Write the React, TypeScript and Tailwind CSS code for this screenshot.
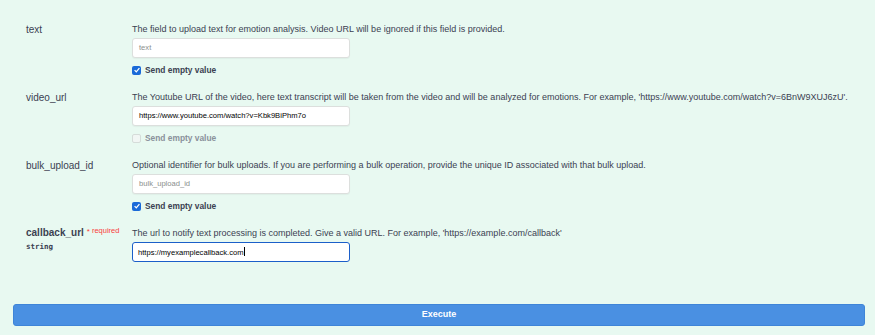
import React from "react";

type Param = {
  name: string;
  desc: string;
  value?: string;
  placeholder?: string;
  empty?: "on" | "off" | "disabled";
  required?: boolean;
  focused?: boolean;
};

const params: Param[] = [
  {
    name: "text",
    desc: "The field to upload text for emotion analysis. Video URL will be ignored if this field is provided.",
    placeholder: "text",
    empty: "on",
  },
  {
    name: "video_url",
    desc: "The Youtube URL of the video, here text transcript will be taken from the video and will be analyzed for emotions. For example, 'https://www.youtube.com/watch?v=6BnW9XUJ6zU'.",
    value: "https://www.youtube.com/watch?v=Kbk9BiPhm7o",
    empty: "disabled",
  },
  {
    name: "bulk_upload_id",
    desc: "Optional identifier for bulk uploads. If you are performing a bulk operation, provide the unique ID associated with that bulk upload.",
    placeholder: "bulk_upload_id",
    empty: "on",
  },
  {
    name: "callback_url",
    desc: "The url to notify text processing is completed. Give a valid URL. For example, 'https://example.com/callback'",
    value: "https://myexamplecallback.com",
    required: true,
    focused: true,
  },
];

function Check({ state }: { state: "on" | "off" | "disabled" }) {
  if (state === "on") {
    return (
      <span className="flex h-[9px] w-[9px] items-center justify-center rounded-[2px] bg-[#1a6ad8]">
        <svg viewBox="0 0 10 10" className="h-[8px] w-[8px]">
          <path d="M2 5.2 L4.1 7.3 L8 2.6" fill="none" stroke="white" strokeWidth="1.6" />
        </svg>
      </span>
    );
  }
  return (
    <span className="h-[9px] w-[9px] rounded-[2px] border border-[#d5dcd9] bg-[#f1f6f4]" />
  );
}

function Row({ p }: { p: Param }) {
  return (
    <div className="flex">
      <div className="w-[106px] shrink-0">
        {p.required ? (
          <>
            <div className="flex items-start leading-[12px]">
              <span className="text-[10px] font-bold text-[#3b4151]">{p.name}</span>
              <span className="ml-[3px] text-[8px] leading-[9px] text-[#f93e3e]">*</span>
              <span className="ml-[2px] text-[7.5px] leading-[8px] text-[#f93e3e]">required</span>
            </div>
            <div className="mt-[3px] text-[7.5px] font-bold leading-[10px] text-[#3b4151] [font-family:'DejaVu_Sans_Mono','Liberation_Mono',monospace]">
              string
            </div>
          </>
        ) : (
          <div className="pt-[1px] text-[10px] leading-[12px] text-[#3b4151]">{p.name}</div>
        )}
      </div>
      <div className="flex flex-col">
        <div className="text-[9px] leading-[12px] text-[#3b4151]">{p.desc}</div>
        <div
          className={
            p.focused
              ? "mt-[3px] flex h-[20px] w-[218px] items-center rounded-[3px] border-[1.5px] border-[#1b5fc9] bg-white px-[5px] text-[7.6px] text-black"
              : "mt-[3px] flex h-[20px] w-[218px] items-center rounded-[3px] border border-[#dcdfdd] bg-white px-[6px] text-[7.6px] text-black shadow-[0_1px_1px_rgba(0,0,0,0.04)]"
          }
        >
          {p.value ? (
            <span>
              {p.value}
              {p.focused && <span className="ml-[0.5px] inline-block h-[9px] w-[1px] translate-y-[1px] bg-black" />}
            </span>
          ) : (
            <span className="text-[#8b8f8d]">{p.placeholder}</span>
          )}
        </div>
        {p.empty && (
          <div className="mt-[6px] flex h-[12px] items-center gap-[4px]">
            <Check state={p.empty} />
            <span
              className={
                p.empty === "disabled"
                  ? "text-[8.4px] font-bold text-[#8a919b]"
                  : "text-[8.4px] font-bold text-[#3b4151]"
              }
            >
              Send empty value
            </span>
          </div>
        )}
      </div>
    </div>
  );
}

export default function App() {
  return (
    <div className="h-[335px] w-[875px] bg-[#e8f9f1] [font-family:'Liberation_Sans',Arial,sans-serif]">
      <div className="flex flex-col gap-[15px] pl-[26px] pt-[23px]">
        {params.map((p) => (
          <Row key={p.name} p={p} />
        ))}
      </div>
      <div className="pl-[13px] pr-[10px] pt-[42px]">
        <button className="flex h-[22px] w-full items-center justify-center rounded-[3px] border border-[#3f85d8] bg-[#4a90e2] text-[9px] font-bold text-white">
          Execute
        </button>
      </div>
    </div>
  );
}
